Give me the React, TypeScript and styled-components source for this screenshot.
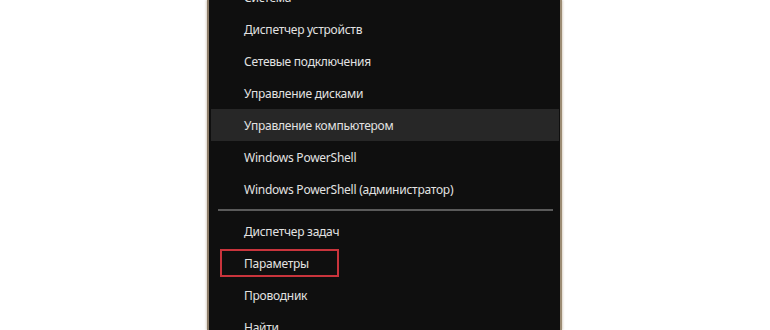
import React from "react";
import styled, { createGlobalStyle } from "styled-components";

const Global = createGlobalStyle`
  html, body { margin: 0; padding: 0; background: #ffffff; }
  body { width: 770px; height: 330px; overflow: hidden; }
`;

const Page = styled.div`
  width: 770px;
  height: 330px;
  display: flex;
  justify-content: flex-start;
  background: #ffffff;
  overflow: hidden;
`;

const Menu = styled.div`
  margin-left: 207px;
  width: 348px;
  height: 330px;
  background: #0f0f0f;
  border-left: 2px solid #8c7c68;
  border-right: 2px solid #9c8c74;
  box-shadow: -1px 0 2px rgba(160, 140, 110, 0.35), 1px 0 2px rgba(160, 140, 110, 0.35);
  display: flex;
  flex-direction: column;
  padding: 0 1px 0 2px;
  box-sizing: content-box;
  overflow: hidden;
`;

const List = styled.div`
  margin-top: -19px;
  display: flex;
  flex-direction: column;
`;

const Row = styled.div<{ $hover?: boolean; $marked?: boolean }>`
  position: relative;
  height: 32px;
  flex: 0 0 32px;
  display: flex;
  align-items: center;
  padding-left: 33px;
  background: ${(p) => (p.$hover ? "#272727" : "transparent")};
  color: #e2e2e2;
  font-family: "Noto Sans", "Open Sans", sans-serif;
  font-size: 12px;
  letter-spacing: -0.25px;
  white-space: nowrap;
  ${(p) =>
    p.$marked
      ? `
    &::after {
      content: "";
      position: absolute;
      left: 9px;
      top: 2px;
      width: 115px;
      height: 24px;
      border: 2px solid #c9343c;
    }
  `
      : ""}
`;

const Separator = styled.div`
  height: 10px;
  flex: 0 0 10px;
  display: flex;
  align-items: center;
  padding: 0 6px 0 7px;
  &::before {
    content: "";
    flex: 1;
    height: 2px;
    background: #5a5a5a;
  }
`;

const top = [
  { label: "Система" },
  { label: "Диспетчер устройств" },
  { label: "Сетевые подключения" },
  { label: "Управление дисками" },
  { label: "Управление компьютером", hover: true },
  { label: "Windows PowerShell" },
  { label: "Windows PowerShell (администратор)" },
];

const bottom = [
  { label: "Диспетчер задач" },
  { label: "Параметры", marked: true },
  { label: "Проводник" },
  { label: "Найти" },
];

export default function App() {
  return (
    <>
      <Global />
      <Page>
        <Menu>
          <List>
            {top.map((it) => (
              <Row key={it.label} $hover={it.hover}>
                {it.label}
              </Row>
            ))}
            <Separator />
            {bottom.map((it) => (
              <Row key={it.label} $marked={it.marked}>
                {it.label}
              </Row>
            ))}
          </List>
        </Menu>
      </Page>
    </>
  );
}
